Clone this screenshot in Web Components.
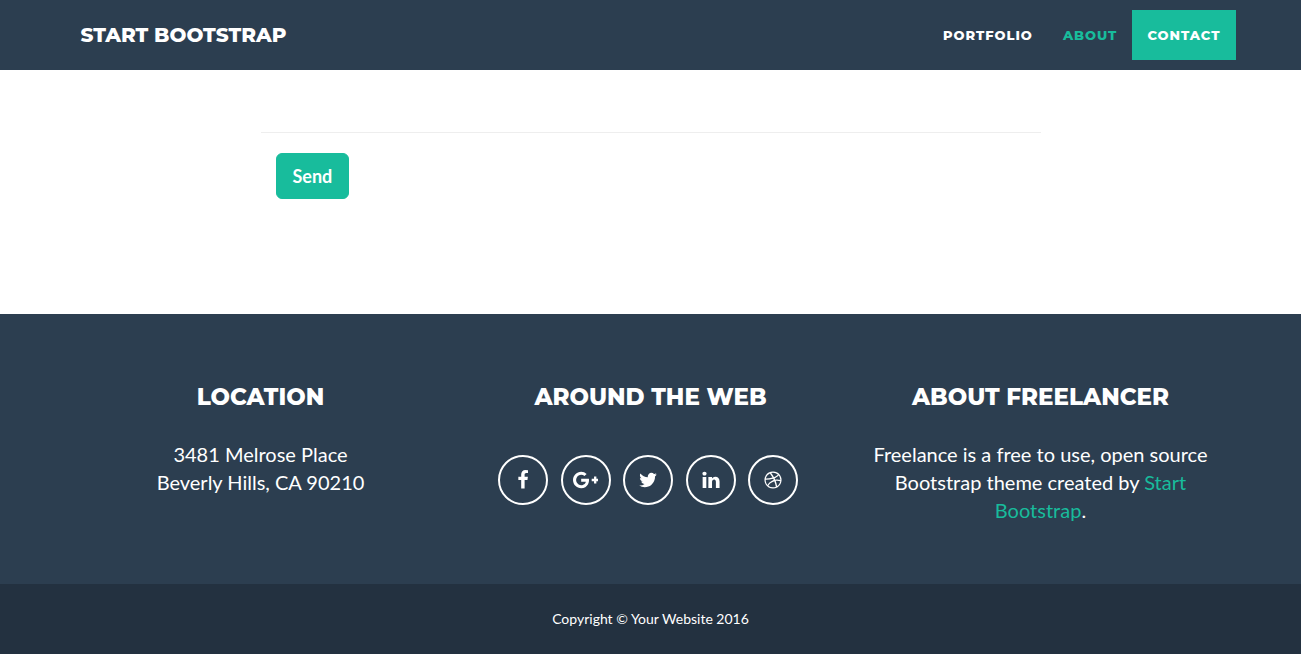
<!DOCTYPE html>
<html lang="en">
<head>
<meta charset="utf-8">
<meta name="viewport" content="width=device-width, initial-scale=1">
<title>Freelancer - Start Bootstrap Theme</title>
<style>
  :root {
    --navy: #2c3e50;
    --navy-dark: #233140;
    --teal: #18bc9c;
    --heading-font: Montserrat, Inter, "Liberation Sans", sans-serif;
  }
  body {
    margin: 0;
    background: #fff;
    color: var(--navy);
    font: 20px/28px Lato, "Liberation Sans", sans-serif;
  }
</style>
</head>
<body>
<site-nav>
  <nav-link href="#portfolio">PORTFOLIO</nav-link>
  <nav-link href="#about" highlighted>ABOUT</nav-link>
  <nav-link href="#contact" active>CONTACT</nav-link>
</site-nav>
<contact-section></contact-section>
<site-footer>
  <footer-column heading="LOCATION">3481 Melrose Place<br>Beverly Hills, CA 90210</footer-column>
  <footer-column heading="AROUND THE WEB"><social-links></social-links></footer-column>
  <footer-column heading="ABOUT FREELANCER">Freelance is a free to use, open source Bootstrap theme created by <theme-link>Start Bootstrap</theme-link>.</footer-column>
  <span slot="copyright">Copyright © Your Website 2016</span>
</site-footer>

<script>
  function define(name, html, setup) {
    const template = document.createElement('template');
    template.innerHTML = html;
    customElements.define(name, class extends HTMLElement {
      constructor() {
        super();
        this.attachShadow({ mode: 'open' }).append(template.content.cloneNode(true));
      }
      connectedCallback() {
        if (setup) setup(this, this.shadowRoot);
      }
    });
  }

  define('nav-link', `
    <style>
      :host { display: block; }
      a {
        display: block;
        padding: 15px;
        color: #fff;
        font: 800 13px/20px var(--heading-font);
        letter-spacing: 1px;
        text-decoration: none;
      }
      :host([highlighted]) a { color: var(--teal); }
      :host([active]) a { background: var(--teal); }
    </style>
    <a><slot></slot></a>`,
    (host, root) => { root.querySelector('a').href = host.getAttribute('href'); });

  define('site-nav', `
    <style>
      :host { display: block; background: var(--navy); }
      nav {
        display: flex;
        align-items: center;
        justify-content: space-between;
        max-width: 1170px;
        margin: 0 auto;
        padding: 10px 0;
      }
      .brand {
        padding: 0 15px;
        color: #fff;
        font: 800 20px/50px var(--heading-font);
        text-decoration: none;
      }
      .links { display: flex; }
    </style>
    <nav>
      <a class="brand" href="#top">START BOOTSTRAP</a>
      <div class="links"><slot></slot></div>
    </nav>`);

  define('contact-section', `
    <style>
      :host { display: block; padding: 62px 15px 115px; }
      form { max-width: 780px; margin: 0 auto; }
      hr { height: 0; margin: 0 0 20px; border: 0; border-top: 1px solid #eee; }
      button {
        display: block;
        margin: 0 15px;
        padding: 10px 16px;
        border: 1px solid var(--teal);
        border-radius: 6px;
        background: var(--teal);
        color: #fff;
        font: 700 18px/24px Lato, "Liberation Sans", sans-serif;
      }
    </style>
    <form>
      <hr>
      <button type="submit">Send</button>
    </form>`);

  define('footer-column', `
    <style>
      :host { display: block; padding: 0 15px; }
      h3 { margin: 0 0 30px; font: 800 23px/26px var(--heading-font); }
    </style>
    <h3></h3>
    <div><slot></slot></div>`,
    (host, root) => { root.querySelector('h3').textContent = host.getAttribute('heading'); });

  define('theme-link', `
    <style>
      :host { display: inline; }
      a { color: var(--teal); text-decoration: none; }
    </style>
    <a href="#start-bootstrap"><slot></slot></a>`);

  define('social-links', `
    <style>
      :host { display: block; padding: 15px 5px 0 0; }
      ul {
        display: flex;
        justify-content: space-between;
        max-width: 300px;
        margin: 0 auto;
        padding: 0;
        list-style: none;
      }
      a {
        display: grid;
        place-items: center;
        box-sizing: border-box;
        width: 50px;
        height: 50px;
        border: 2px solid #fff;
        border-radius: 50%;
        color: #fff;
      }
      svg { display: block; height: 20px; fill: currentColor; }
    </style>
    <ul>
      <li><a href="#facebook" aria-label="Facebook"><svg viewBox="0 0 1792 1792"><path d="M1343 12v264h-157q-86 0-116 36t-30 108v189h293l-39 296h-254v759h-306v-759h-255v-296h255v-218q0-186 104-288.5t277-102.5q147 0 228 12z"/></svg></a></li>
      <li><a href="#google-plus" aria-label="Google Plus"><svg viewBox="0 0 2304 1792"><path transform="matrix(1 0 0 -1 0 1536)" d="M1437 623q0 -208 -87 -370.5t-248 -254t-369 -91.5q-149 0 -285 58t-234 156t-156 234t-58 285t58 285t156 234t234 156t285 58q286 0 491 -192l-199 -191q-117 113 -292 113q-123 0 -227.5 -62t-165.5 -168.5t-61 -232.5t61 -232.5t165.5 -168.5t227.5 -62q83 0 152.5 23t114.5 57.5t78.5 78.5t49 83t21.5 74h-416v252h692q12 -63 12 -122zM2304 745v-210h-209v-209h-210v209h-209v210h209v209h210v-209h209z"/></svg></a></li>
      <li><a href="#twitter" aria-label="Twitter"><svg viewBox="0 0 1792 1792"><path d="M1684 408q-67 98-162 167 1 14 1 42 0 130-38 259.5t-115.5 248.5-184.5 210.5-258 146-323 54.5q-271 0-496-145 35 4 78 4 225 0 401-138-105-2-188-64.5t-114-159.5q33 5 61 5 43 0 85-11-112-23-185.5-111.5t-73.5-205.5v-4q68 38 146 41-66-44-105-115t-39-154q0-88 44-163 121 149 294.5 238.5t371.5 99.5q-8-38-8-74 0-134 94.5-228.5t228.5-94.5q140 0 236 102 109-21 205-78-37 115-142 178 93-10 186-50z"/></svg></a></li>
      <li><a href="#linkedin" aria-label="LinkedIn"><svg viewBox="0 0 1792 1792"><path d="M477 625v991h-330v-991h330zm21-306q1 73-50.5 122t-135.5 49h-2q-82 0-132-49t-50-122q0-74 51.5-122.5t134.5-48.5 133 48.5 51 122.5zm1166 729v568h-329v-530q0-105-40.5-164.5t-126.5-59.5q-63 0-105.5 34.5t-63.5 85.5q-11 30-11 81v553h-329q2-399 2-647t-1-296l-1-48h329v144h-2q20-32 41-56t56.5-52 87-43.5 114.5-15.5q171 0 275 113.5t104 332.5z"/></svg></a></li>
      <li><a href="#dribbble" aria-label="Dribbble"><svg viewBox="0 0 1792 1792"><path d="M1152 1500q-42-241-140-498h-2l-2 1q-16 6-43 16.5t-101 49-137 82-131 114.5-103 148l-15-11q184 150 418 150 132 0 256-52zm-185-607q-21-49-53-111-311 93-673 93-1 7-1 21 0 124 44 236.5t124 201.5q50-89 123.5-166.5t142.5-124.5 130.5-81 99.5-48l37-13q4-1 13-3.5t13-4.5zm-107-212q-120-213-244-378-138 65-234 186t-128 272q302 0 606-80zm684 319q-210-60-409-29 87 239 128 469 111-75 185-189.5t96-250.5zm-805-741q-1 0-2 1 1-1 2-1zm590 145q-185-164-433-164-76 0-155 19 131 170 246 382 69-26 130-60.5t96.5-61.5 65.5-57 37.5-40.5zm223 485q-3-232-149-410l-1 1q-9 12-19 24.5t-43.5 44.5-71 60.5-100 65-131.5 64.5q25 53 44 95 2 5 6.5 17t7.5 17q36-5 74.5-7t73.5-2 69 1.5 64 4 56.5 5.5 48 6.5 36.5 6 25 4.5zm112 7q0 209-103 385.5t-279.5 279.5-385.5 103-385.5-103-279.5-279.5-103-385.5 103-385.5 279.5-279.5 385.5-103 385.5 103 279.5 279.5 103 385.5z"/></svg></a></li>
    </ul>`);

  define('site-footer', `
    <style>
      :host { display: block; color: #fff; text-align: center; }
      .above { background: var(--navy); padding: 70px 0 60px; }
      .columns {
        display: grid;
        grid-template-columns: repeat(3, 1fr);
        max-width: 1170px;
        margin: 0 auto;
      }
      .below {
        padding: 25px 15px;
        background: var(--navy-dark);
        font-size: 14px;
        line-height: 20px;
      }
    </style>
    <footer>
      <div class="above"><div class="columns"><slot></slot></div></div>
      <div class="below"><slot name="copyright"></slot></div>
    </footer>`);
</script>
</body>
</html>
